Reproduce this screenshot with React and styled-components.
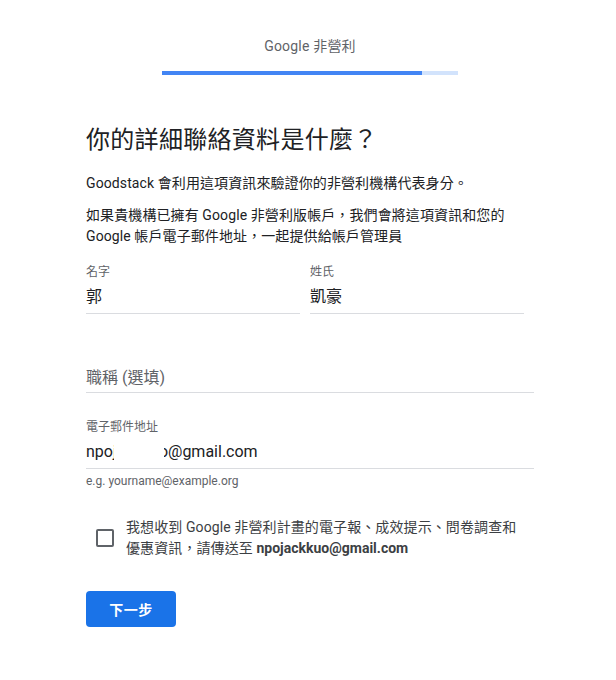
import React from "react";
import styled, { createGlobalStyle } from "styled-components";

const Global = createGlobalStyle`
  html, body { margin: 0; padding: 0; background: #fff; }
  body { font-family: Roboto, "Noto Sans CJK TC", "Noto Sans", sans-serif; color: #202124; }
  * { box-sizing: border-box; }
`;

const Page = styled.div`
  width: 448px;
  margin-left: 86px;
  padding-top: 37px;
  display: flex;
  flex-direction: column;
`;

const Brand = styled.div`
  text-align: center;
  font-size: 14px;
  line-height: 18px;
  color: #5f6368;
  letter-spacing: 0.2px;
`;

const Progress = styled.div`
  width: 296px;
  height: 4px;
  margin: 16px auto 0;
  background: #d2e3fc;
  display: flex;
`;

const ProgressFill = styled.div`
  height: 100%;
  background: #4285f4;
`;

const Title = styled.h1`
  margin: 48px 0 0;
  font-size: 24px;
  line-height: 34px;
  font-weight: 400;
  color: #202124;
  letter-spacing: 0.3px;
`;

const Para = styled.p`
  margin: ${(p) => p.$mt}px 0 0;
  font-size: 14px;
  line-height: 21px;
  color: #202124;
  letter-spacing: 0.1px;
`;

const Row = styled.div`
  display: flex;
  gap: 10px;
  margin-top: ${(p) => p.$mt}px;
`;

const Field = styled.div`
  display: flex;
  flex-direction: column;
  width: ${(p) => p.$w}px;
  margin-top: ${(p) => p.$mt || 0}px;
`;

const Label = styled.div`
  font-size: 12px;
  line-height: 16px;
  color: #5f6368;
`;

const Value = styled.div`
  position: relative;
  font-size: 16px;
  line-height: 20px;
  color: #202124;
  padding: 7px 0 6px;
  border-bottom: 1px solid #dadce0;
`;

const Placeholder = styled(Value)`
  color: #5f6368;
  padding: 0 0 4px;
`;

const Mask = styled.span`
  position: absolute;
  left: 28px;
  top: 5px;
  width: 50px;
  height: 24px;
  background: #fff;
`;

const Helper = styled.div`
  font-size: 12px;
  line-height: 16px;
  color: #5f6368;
  margin-top: 4px;
`;

const CheckRow = styled.label`
  display: flex;
  align-items: center;
  gap: 12px;
  margin-top: 28px;
  padding-left: 10px;
`;

const Box = styled.span`
  flex: none;
  width: 18px;
  height: 18px;
  border: 2px solid #5f6368;
  border-radius: 2px;
`;

const CheckText = styled.div`
  font-size: 14px;
  line-height: 21px;
  color: #3c4043;
  letter-spacing: 0.1px;
  b { font-weight: 700; color: #3c4043; letter-spacing: 0; }
`;

const Button = styled.button`
  margin-top: 32px;
  width: 90px;
  height: 36px;
  border: none;
  border-radius: 4px;
  background: #1a73e8;
  color: #fff;
  font-family: Roboto, "Noto Sans CJK TC", sans-serif;
  font-size: 14px;
  font-weight: 700;
  letter-spacing: 0.5px;
  cursor: pointer;
`;

export default function App() {
  return (
    <>
      <Global />
      <Page>
        <Brand>Google 非營利</Brand>
        <Progress>
          <ProgressFill style={{ width: `${(260 / 296) * 100}%` }} />
        </Progress>
        <Title>你的詳細聯絡資料是什麼？</Title>
        <Para $mt={16}>Goodstack 會利用這項資訊來驗證你的非營利機構代表身分。</Para>
        <Para $mt={11}>
          如果貴機構已擁有 Google 非營利版帳戶，我們會將這項資訊和您的
          <br />
          Google 帳戶電子郵件地址，一起提供給帳戶管理員
        </Para>
        <Row $mt={17}>
          <Field $w={214}>
            <Label>名字</Label>
            <Value>郭</Value>
          </Field>
          <Field $w={214}>
            <Label>姓氏</Label>
            <Value>凱豪</Value>
          </Field>
        </Row>
        <Field $w={448} $mt={54}>
          <Placeholder>職稱 (選填)</Placeholder>
        </Field>
        <Field $w={448} $mt={26}>
          <Label>電子郵件地址</Label>
          <Value>
            npojackkuo@gmail.com
            <Mask />
          </Value>
          <Helper>e.g. yourname@example.org</Helper>
        </Field>
        <CheckRow>
          <Box />
          <CheckText>
            我想收到 Google 非營利計畫的電子報、成效提示、問卷調查和
            <br />
            優惠資訊，請傳送至 <b>npojackkuo@gmail.com</b>
          </CheckText>
        </CheckRow>
        <div>
          <Button>下一步</Button>
        </div>
      </Page>
    </>
  );
}
